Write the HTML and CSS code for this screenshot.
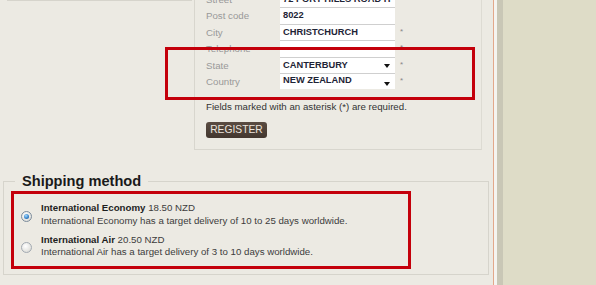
FILE: index.html
```html
<!DOCTYPE html>
<html>
<head>
<meta charset="utf-8">
<link rel="stylesheet" href="styles.css">
</head>
<body>
<div class="main">
  <div class="top">
    <div class="stub"><div class="stub-line"></div></div>
    <div class="panel">
      <div class="rows">
        <div class="row"><span class="lbl">Street</span><span class="inp">72 PORT HILLS ROAD H</span><span class="req"></span></div>
        <div class="row"><span class="lbl">Post code</span><span class="inp">8022</span><span class="req"></span></div>
        <div class="row"><span class="lbl">City</span><span class="inp">CHRISTCHURCH</span><span class="req">*</span></div>
        <div class="row"><span class="lbl">Telephone</span><span class="inp"></span><span class="req">*</span></div>
        <div class="row"><span class="lbl">State</span><span class="inp sel">CANTERBURY<i class="arrow"></i></span><span class="req">*</span></div>
        <div class="row"><span class="lbl">Country</span><span class="inp sel up">NEW ZEALAND<i class="arrow"></i></span><span class="req">*</span></div>
      </div>
      <p class="note">Fields marked with an asterisk (*) are required.</p>
      <button class="btn">REGISTER</button>
    </div>
  </div>
  <fieldset class="ship">
    <legend>Shipping method</legend>
    <div class="hl-box">
      <div class="opt">
        <span class="radio checked"></span>
        <div class="opt-text">
          <div><b>International Economy</b> 18.50 NZD</div>
          <div>International Economy has a target delivery of 10 to 25 days worldwide.</div>
        </div>
      </div>
      <div class="opt">
        <span class="radio"></span>
        <div class="opt-text">
          <div><b>International Air</b> 20.50 NZD</div>
          <div>International Air has a target delivery of 3 to 10 days worldwide.</div>
        </div>
      </div>
    </div>
  </fieldset>
  <div class="hl-overlay"></div>
</div>
<div class="gap"></div>
<div class="side"></div>
</body>
</html>
```
FILE: styles.css
```css
html, body {
  margin: 0;
  padding: 0;
}
body {
  display: flex;
  height: 285px;
  overflow: hidden;
  background: #dedcc7;
  font-family: "Liberation Sans", Arial, sans-serif;
  font-size: 9.7px;
  color: #3a3a3a;
}
.main {
  position: relative;
  width: 493px;
  flex: none;
  background: #eceae3;
  border-right: 1px solid #e2a88b;
}
.gap {
  width: 3px;
  flex: none;
  background: #f5f4f0;
}
.side {
  flex: 1;
  background: #dedcc7;
  border-left: 6px solid #c9c7b6;
}
.top {
  display: flex;
}
.stub {
  width: 194px;
  flex: none;
}
.stub-line {
  margin-left: 7px;
  width: 185px;
  height: 1px;
  background: #d6d4cc;
}
.panel {
  box-sizing: border-box;
  width: 288px;
  margin-top: -9px;
  padding: 0 0 11px 11px;
  border-left: 1px solid #d8d6ce;
  border-right: 1px solid #dddbd3;
  border-bottom: 1px solid #d8d6ce;
}
.rows {
  display: grid;
  grid-auto-rows: 16.4px;
}
.row {
  display: flex;
  align-items: stretch;
}
.lbl {
  width: 74px;
  flex: none;
  color: #999;
  line-height: 16.4px;
  padding-top: 1px;
}
.inp {
  position: relative;
  box-sizing: border-box;
  width: 115px;
  flex: none;
  background: #fff;
  border-top: 1px solid #cfcfcf;
  padding-left: 3px;
  font-weight: bold;
  font-size: 9.3px;
  color: #1e2436;
  line-height: 15px;
  white-space: nowrap;
  overflow: hidden;
}
.inp.up {
  line-height: 12px;
}
.arrow {
  position: absolute;
  right: 5px;
  top: 6.5px;
  width: 0;
  height: 0;
  border-left: 3.5px solid transparent;
  border-right: 3.5px solid transparent;
  border-top: 4px solid #111;
}
.inp.up .arrow {
  top: 8px;
}
.req {
  padding-left: 5px;
  color: #888;
  font-size: 8px;
  line-height: 16.4px;
}
.note {
  margin: 12px 0 0;
  line-height: 12px;
  color: #333;
}
.btn {
  display: block;
  margin-top: 9px;
  width: 61px;
  height: 16px;
  padding: 0;
  border: none;
  border-radius: 3px;
  background: linear-gradient(#5a4c42, #43372f);
  color: #eee6df;
  font-family: "Liberation Sans", Arial, sans-serif;
  font-size: 10.3px;
  line-height: 16px;
}
.ship {
  margin: 23px 0 0 3px;
  width: 486px;
  box-sizing: border-box;
  padding: 0 0 5px 7px;
  border: 1px solid #d6d4cc;
  min-width: 0;
}
.ship legend {
  margin-left: 4px;
  padding: 0 7px;
  font-size: 14.6px;
  font-weight: bold;
  color: #1a1a1a;
  line-height: 17px;
}
.hl-box {
  box-sizing: border-box;
  width: 400px;
  margin-top: 1px;
  border: 3px solid #c4000b;
  padding: 8px 0 7px 7px;
}
.opt {
  display: flex;
  align-items: center;
  gap: 9px;
}
.opt + .opt {
  margin-top: 6px;
}
.opt-text {
  line-height: 12.7px;
  color: #3c3c3c;
}
.opt-text b {
  color: #1e1e1e;
}
.radio {
  position: relative;
  box-sizing: border-box;
  width: 11px;
  height: 11px;
  margin-top: 3px;
  border-radius: 50%;
  border: 1px solid #a3aab2;
  background: radial-gradient(circle at 40% 35%, #ffffff 0%, #e6e6e2 60%, #cfcfcb 100%);
  flex: none;
}
.radio.checked {
  border-color: #7c8c9c;
}
.radio.checked::after {
  content: "";
  position: absolute;
  left: 2px;
  top: 2px;
  width: 5px;
  height: 5px;
  border-radius: 50%;
  background: radial-gradient(circle at 40% 35%, #a8dcff 0%, #3a86cc 55%, #1a4f8e 100%);
}
.hl-overlay {
  position: absolute;
  left: 165px;
  top: 47px;
  width: 310px;
  height: 53px;
  box-sizing: border-box;
  border: 3px solid #c4000b;
}
```
